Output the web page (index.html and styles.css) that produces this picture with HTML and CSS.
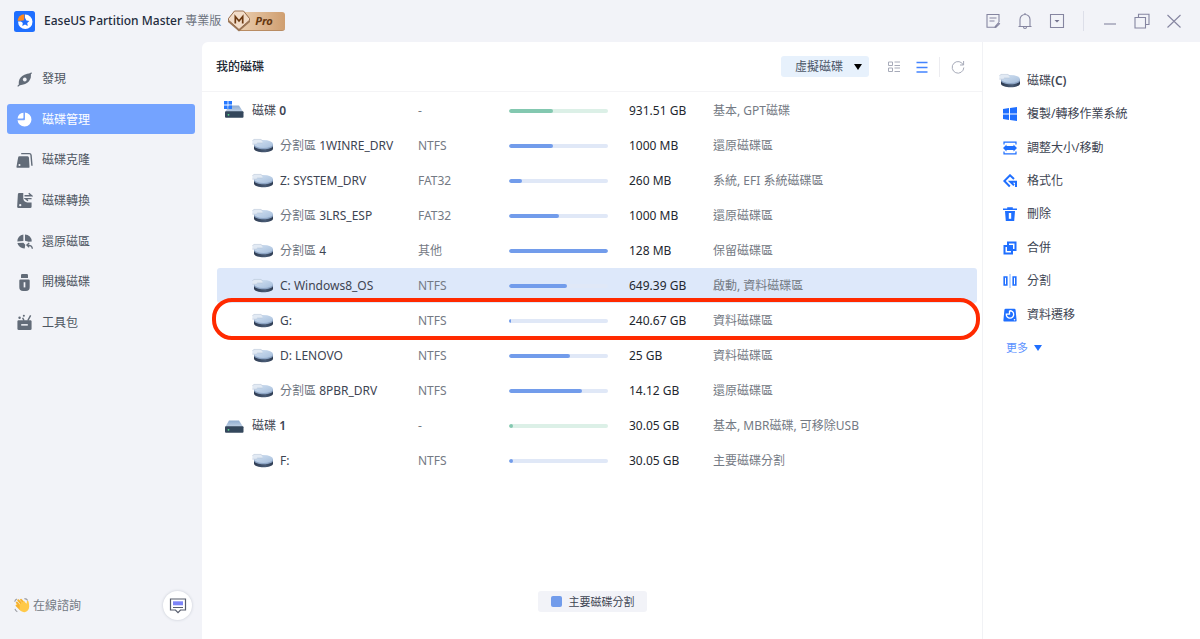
FILE: index.html
```html
<!DOCTYPE html>
<html lang="zh-Hant">
<head>
<meta charset="utf-8">
<meta name="viewport" content="width=device-width, initial-scale=1">
<title>EaseUS Partition Master</title>
<link rel="stylesheet" href="styles.css">
</head>
<body>
<svg class="defs" aria-hidden="true">
  <defs>
    <linearGradient id="disk-top" x1="0" y1="0" x2="1" y2="1"><stop offset="0" stop-color="#d3e2f3"/><stop offset="1" stop-color="#a6bedb"/></linearGradient>
    <linearGradient id="disk-side" x1="0" y1="0" x2="1" y2="0"><stop offset="0" stop-color="#2c3a50"/><stop offset=".6" stop-color="#4a5c76"/><stop offset="1" stop-color="#2c3a50"/></linearGradient>
    <linearGradient id="box-top" x1="0" y1="0" x2="0" y2="1"><stop offset="0" stop-color="#8facd0"/><stop offset="1" stop-color="#c5d4e6"/></linearGradient>
    <symbol id="volume" viewBox="0 0 22 16">
      <path d="M2 7v3.500c0 5 19 5 19 0V7z" fill="url(#disk-side)"/>
      <path d="M2 6v1.500c0 5 19 5 19 0V6z" fill="#8ea6c6"/>
      <ellipse cx="11.500" cy="6" rx="9.500" ry="4" fill="url(#disk-top)"/>
      <path d="M.4 3l1.400-1.600h7.400L10.400 3v2H5.500L4.300 6.200H.4z" fill="#e2eaf4"/>
      <path d="M.4 3l1.400-1.600h7.400L10.400 3M.4 6.200h3.900L5.500 5h4.900" fill="none" stroke="#aebdd2" stroke-width=".5"/>
    </symbol>
    <symbol id="drive" viewBox="0 0 20 18">
      <path d="M5 3.500h10l4.500 7H1z" fill="url(#box-top)"/>
      <rect x="1" y="9.300" width="18.500" height="6.400" rx="1" fill="#34475c"/>
      <circle cx="4.500" cy="12.800" r=".9" fill="#58d68d"/>
    </symbol>
  </defs>
</svg>
<div class="app">
  <header class="titlebar">
    <svg class="logo" viewBox="0 0 21 21"><rect width="21" height="21" rx="2.500" fill="#1f6fff"/><circle cx="11.300" cy="10.800" r="7.200" fill="#fff"/><path d="M11 10.500V3H3.300v7.500z" fill="#1f6fff"/><path d="M10.300 9.800V3.200A7 7 0 0 0 3.500 9.800z" fill="#ff8a1e"/><path d="m11 6.800 1.400 2.700 3 .4-2.200 2 .6 3-2.800-1.400-2.700 1.400.5-3-2.100-2 3-.4z" fill="#1f6fff"/></svg>
    <h1 class="app-name">EaseUS Partition Master <span class="edition">專業版</span></h1>
    <span class="pro">
      <svg class="pro-gem" viewBox="0 0 24 22" aria-hidden="true"><path d="M7 1.500h10l6 7.500v3L12 21.500 1 12V9z" fill="#9b7657"/><path d="M7.500 1h9L22.500 8.500v1.700L12 19.500 1.500 10.200V8.500z" fill="#f2dcc8" stroke="#936846" stroke-width=".9"/><path d="M8.300 13.500V6.500l3.700 4.500 3.700-4.500v7" fill="none" stroke="#6d3a12" stroke-width="1.700"/></svg>
      <span class="pro-label">Pro</span>
    </span>
    <div class="window-tools">
      <button class="tool" aria-label="筆記"><svg viewBox="0 0 16 16"><path d="M14 9V1.500H2v12.800h7M4.500 5h7M4.500 8h5M9.500 14.300l4-4.500 1 1-3.700 3.700z"/></svg></button>
      <button class="tool" aria-label="通知"><svg viewBox="0 0 16 18"><path d="M1.500 14.500h13M3 14V7.500a5 5 0 0 1 10 0V14M6.500 15c0 2 3 2 3 0M8 2.500V1"/></svg></button>
      <button class="tool" aria-label="選單"><svg viewBox="0 0 16 16"><path d="M1.500 1.500h13v13h-13z"/><path d="m5.500 7 2.500 2.500L10.500 7z" fill="#74748f" stroke="none"/></svg></button>
    </div>
    <div class="window-controls">
      <button class="tool" aria-label="最小化"><svg viewBox="0 0 16 16"><path d="M2 11h12"/></svg></button>
      <button class="tool" aria-label="還原"><svg viewBox="0 0 16 16"><path d="M1 4.500h10.500V15H1zM4.500 4.500V1.200H15v10.300h-3.500"/></svg></button>
      <button class="tool" aria-label="關閉"><svg viewBox="0 0 16 16"><path d="m1.500 2 13 12.500m0-12.500-13 12.500"/></svg></button>
    </div>
  </header>

  <aside class="sidebar">
    <nav class="nav">
      <a class="nav-item" href="#discover"><svg viewBox="0 0 18 18"><path d="M3.200 15.300C1.800 9.500 5 3.200 15.500 2.500 17 8.500 13.500 14.500 3.200 15.300z"/><circle cx="9.300" cy="9" r="2" fill="#f2f3f8"/><path d="m1.800 16.300 3-3M13.500 4.500 16.500 1.800" stroke="#626b78" stroke-width="1.300"/></svg>發現</a>
      <a class="nav-item active" href="#manage"><svg viewBox="0 0 18 18"><path d="M9.500 8.800V1.700a7.400 7.400 0 1 1-7.900 8.100h6.900a1 1 0 0 0 1-1z"/><path d="M1.700 8A6.800 6.800 0 0 1 7.900 1.800V7a1 1 0 0 1-1 1z"/></svg>磁碟管理</a>
      <a class="nav-item" href="#clone"><svg viewBox="0 0 18 18"><path d="M3.800 4.500h8.400a1.500 1.500 0 0 1 1.500 1.600l.6 9.400a1.200 1.200 0 0 1-1.200 1.300H1.700a1.200 1.200 0 0 1-1.200-1.300l1.700-9.500a1.600 1.600 0 0 1 1.600-1.500z"/><circle cx="3.700" cy="13.700" r="1.100" fill="#f2f3f8"/><path d="M5.500 1.700h8.700q1.500 0 1.700 1.500l1 11.300" fill="none" stroke="#626b78" stroke-width="1.500"/></svg>磁碟克隆</a>
      <a class="nav-item" href="#convert"><svg viewBox="0 0 18 18"><path d="M3.500 1h4.200v6q.5 4 4.300 4h4.500v4.500a1.500 1.500 0 0 1-1.500 1.500H2.700a1.500 1.500 0 0 1-1.500-1.500l.8-13A1.500 1.500 0 0 1 3.500 1z"/><circle cx="4.500" cy="14" r="1.200" fill="#f2f3f8"/><path d="M9 4h7.500l-3-2.700M16.500 7H10l2.700 2.300" fill="none" stroke="#626b78" stroke-width="1.500"/></svg>磁碟轉換</a>
      <a class="nav-item" href="#recover"><svg viewBox="0 0 18 18"><path d="M7.800 1.500v7L1.400 9A7.400 7.400 0 0 1 7.800 1.500zM9.500 1.500A7.400 7.400 0 0 1 16.700 9l-3.200.3-4-1zM1.500 10.500l6.300-.3 2 2.300-.6 4A7.400 7.400 0 0 1 1.500 10.500z"/><path d="M17.300 16.800q0-4-5.500-4m2.200-2.300-2.500 2.300 2.500 2.300" fill="none" stroke="#626b78" stroke-width="1.400"/></svg>還原磁區</a>
      <a class="nav-item" href="#boot"><svg viewBox="0 0 18 18"><path d="M6.500 0h5a1.200 1.200 0 0 1 1.200 1.200v3H5.300v-3A1.200 1.200 0 0 1 6.500 0zM4.800 5.700h8.400a1.300 1.300 0 0 1 1.300 1.300v7q0 4-4 4h-3q-4 0-4-4V7a1.300 1.300 0 0 1 1.300-1.300z"/><path d="M9 8.700v5.500" stroke="#f2f3f8" stroke-width="1.800"/></svg>開機磁碟</a>
      <a class="nav-item" href="#toolkit"><svg viewBox="0 0 18 18"><path d="M2.300 6.500h13.400l.8 1v8a1.500 1.500 0 0 1-1.500 1.500H3a1.500 1.500 0 0 1-1.500-1.500v-8z"/><path d="M5.500 11.500h7" stroke="#f2f3f8" stroke-width="1.600"/><path d="m12.500 7 3-5.500M8.500 7 7 4" stroke="#626b78" stroke-width="1.500"/><circle cx="3.800" cy="4" r="1.300"/><circle cx="8.300" cy="1.800" r="1.100"/></svg>工具包</a>
    </nav>
    <div class="support">
      <svg class="wave" viewBox="0 0 18 18" aria-hidden="true"><path d="M11 1.700q2.500 0 3.500 2M1 12.500q.5 2 2.500 3M.8 5Q1 3 3 2" fill="none" stroke="#9b9ca3" stroke-width="1.200"/><path d="m4.500 3.500 4 4.500M3 6l4.500 5M7.500 3l4 4.500M2.800 9l4 4" stroke="#f7b32d" stroke-width="2.200" stroke-linecap="round"/><path d="m6 8 4.500-4 2.500 3.200q.8-1 .6-2.700.8-1.400 1.800.2.500 2 .7 5.300-.2 4.500-4.200 6-3.500.6-6-2.500z" fill="#ffc94a"/></svg>
      <span>在線諮詢</span>
      <button class="chat" aria-label="在線諮詢"><svg viewBox="0 0 18 18"><path d="M1.500 2h15v11h-5L9 15.700 6.500 13h-5z" fill="#fff" stroke="#565c6c" stroke-width="1.200"/><path d="M4 4.300h10v4H4z" fill="#7d84f7"/><path d="M4 10.500h10" stroke="#565c6c"/></svg></button>
    </div>
  </aside>

  <main class="main">
    <div class="toolbar">
      <h2 class="heading">我的磁碟</h2>
      <label class="picker">
        <select aria-label="虛擬磁碟"><option>虛擬磁碟</option></select>
        <svg viewBox="0 0 8 6" aria-hidden="true"><path d="M0 0h8L4 6z"/></svg>
      </label>
      <button class="view" aria-label="詳細檢視"><svg viewBox="0 0 12 12"><path d="M.5 1h4v3.500h-4zM.5 7h4v3.500h-4zM6.500 1H12M6.500 4.500H12M6.500 7H12M6.500 10.500H12"/></svg></button>
      <button class="view selected" aria-label="清單檢視"><svg viewBox="0 0 12 12"><path d="M.5 1.500h11M.5 6.500h11M.5 11h11"/></svg></button>
      <button class="view refresh" aria-label="重新整理"><svg viewBox="0 0 14 14"><path d="M12.300 5A5.800 5.800 0 1 0 12.800 7.500M12.600 1v4H9"/></svg></button>
    </div>

    <table class="disks">
      <colgroup><col class="c-name"><col class="c-fs"><col class="c-use"><col class="c-size"><col class="c-type"></colgroup>
      <tbody>
        <tr class="disk"><th scope="row"><span class="name"><span class="drive-box"><svg><use href="#drive"/></svg><svg class="win" viewBox="0 0 8 8"><path d="M0 0h3.600v3.600H0zM4.400 0H8v3.600H4.400zM0 4.400h3.600V8H0zM4.400 4.400H8V8H4.400z"/></svg></span><span>磁碟 <b>0</b></span></span></th><td>-</td><td><div class="bar"><div class="fill" style="width:44%"></div></div></td><td class="size">931.51 GB</td><td>基本, GPT磁碟</td></tr>
        <tr><th scope="row"><span class="name"><svg><use href="#volume"/></svg><span><i>分割區</i> 1WINRE_DRV</span></span></th><td>NTFS</td><td><div class="bar"><div class="fill" style="width:44%"></div></div></td><td class="size">1000 MB</td><td>還原磁碟區</td></tr>
        <tr><th scope="row"><span class="name"><svg><use href="#volume"/></svg><span>Z: SYSTEM_DRV</span></span></th><td>FAT32</td><td><div class="bar"><div class="fill" style="width:13%"></div></div></td><td class="size">260 MB</td><td>系統, EFI 系統磁碟區</td></tr>
        <tr><th scope="row"><span class="name"><svg><use href="#volume"/></svg><span><i>分割區</i> 3LRS_ESP</span></span></th><td>FAT32</td><td><div class="bar"><div class="fill" style="width:50%"></div></div></td><td class="size">1000 MB</td><td>還原磁碟區</td></tr>
        <tr><th scope="row"><span class="name"><svg><use href="#volume"/></svg><span><i>分割區</i> 4</span></span></th><td>其他</td><td><div class="bar"><div class="fill" style="width:100%"></div></div></td><td class="size">128 MB</td><td>保留磁碟區</td></tr>
        <tr class="current"><th scope="row"><span class="name"><svg><use href="#volume"/></svg><span>C: Windows8_OS</span></span></th><td>NTFS</td><td><div class="bar"><div class="fill" style="width:59%"></div></div></td><td class="size">649.39 GB</td><td>啟動, 資料磁碟區</td></tr>
        <tr class="marked"><th scope="row"><span class="name"><svg><use href="#volume"/></svg><span>G:</span></span></th><td>NTFS</td><td><div class="bar"><div class="fill" style="width:2%"></div></div></td><td class="size">240.67 GB</td><td>資料磁碟區</td></tr>
        <tr><th scope="row"><span class="name"><svg><use href="#volume"/></svg><span>D: LENOVO</span></span></th><td>NTFS</td><td><div class="bar"><div class="fill" style="width:62%"></div></div></td><td class="size">25 GB</td><td>資料磁碟區</td></tr>
        <tr><th scope="row"><span class="name"><svg><use href="#volume"/></svg><span><i>分割區</i> 8PBR_DRV</span></span></th><td>NTFS</td><td><div class="bar"><div class="fill" style="width:74%"></div></div></td><td class="size">14.12 GB</td><td>還原磁碟區</td></tr>
        <tr class="disk"><th scope="row"><span class="name"><span class="drive-box"><svg><use href="#drive"/></svg></span><span>磁碟 <b>1</b></span></span></th><td>-</td><td><div class="bar"><div class="fill" style="width:4%"></div></div></td><td class="size">30.05 GB</td><td>基本, MBR磁碟, 可移除USB</td></tr>
        <tr><th scope="row"><span class="name"><svg><use href="#volume"/></svg><span>F:</span></span></th><td>NTFS</td><td><div class="bar"><div class="fill" style="width:4%"></div></div></td><td class="size">30.05 GB</td><td>主要磁碟分割</td></tr>
      </tbody>
    </table>
    <div class="legend"><span class="swatch"></span>主要磁碟分割</div>
  </main>

  <aside class="panel">
    <h2 class="panel-title"><svg><use href="#volume"/></svg><span>磁碟<b>(C)</b></span></h2>
    <button class="action"><svg viewBox="0 0 14 14"><path d="M0 2 6 1.100v5.400H0zM7 1l7-1v6.500H7zM0 7.500h6v5.400L0 12zM7 7.500h7V14l-7-1z"/></svg>複製/轉移作業系統</button>
    <button class="action"><svg viewBox="0 0 14 14"><path d="M1 3.500V1.200h12v2.300M1 10.500v2.300h12v-2.300" class="line"/><path d="M0 7l3.500-3.500V5h7V3.500L14 7l-3.500 3.500V9h-7v1.500z"/></svg>調整大小/移動</button>
    <button class="action"><svg viewBox="0 0 14 14"><path d="M11 5 7 1.300 1.300 7l5.500 5.500M13 13V7.800H7.300l3.700 3.500" class="line thick"/></svg>格式化</button>
    <button class="action"><svg viewBox="0 0 14 14"><path d="M0 1.500h4.200V.3h5.600v1.200H14V3H0zM2 4h10l-.8 10H2.800z"/><path d="M5.800 6v5.800h2.400V6z" fill="#fff"/></svg>刪除</button>
    <button class="action"><svg viewBox="0 0 14 14"><path d="M5 1.500h7.500V9H5zM1.500 5H9v7.500H1.500z" class="line thick"/><path d="M5 5h4v4H5z"/></svg>合併</button>
    <button class="action"><svg viewBox="0 0 14 14"><path d="M1.200 3h2.600v8H1.200zM10.200 3h2.600v8h-2.600z" class="line bold"/><path d="M7 0v14" stroke="#7fb0ff"/></svg>分割</button>
    <button class="action"><svg viewBox="0 0 14 14"><path d="M2.700.8h8.600a1.300 1.300 0 0 1 1.300 1.200l1 10.300a1 1 0 0 1-1 1.200H1.400a1 1 0 0 1-1-1.200L1.400 2A1.300 1.300 0 0 1 2.700.8z"/><path d="M6.500 2.800v3.400H3.300a3.700 3.700 0 1 0 3.200-3.400" fill="none" stroke="#fff" stroke-width="1.300"/><circle cx="11.500" cy="11.700" r=".8" fill="#fff"/></svg>資料遷移</button>
    <button class="more">更多<svg viewBox="0 0 8 6" aria-hidden="true"><path d="M0 0h8L4 6z"/></svg></button>
  </aside>
</div>
</body>
</html>
```

FILE: styles.css
```css
* { box-sizing: border-box; }

body {
  margin: 0;
  background: #f2f3f8;
  color: #3d4452;
  font: 12px/18px "Noto Sans", "Noto Sans CJK TC", sans-serif;
}

button, select { font: inherit; color: inherit; border: 0; padding: 0; margin: 0; background: none; }
h1, h2 { margin: 0; font-size: 12px; }
i { font-style: normal; color: #6d7480; }
b { font-weight: 600; }
svg { flex: none; display: block; }
.defs { position: absolute; width: 0; height: 0; }

.app {
  display: grid;
  grid-template: 42px 1fr / 202px 1fr 218px;
  min-height: 100vh;
}

/* Title bar */
.titlebar { grid-column: 1 / -1; display: flex; align-items: center; padding: 0 18px 0 14px; }
.logo { width: 21px; height: 21px; }
.app-name { margin-left: 9px; font-weight: 500; color: #222b3d; }
.edition { font-weight: 400; color: #6d7480; }
.pro { display: flex; align-items: center; margin-left: 6px; }
.pro-gem { width: 24px; height: 22px; z-index: 1; }
.pro-label {
  margin-left: -14px;
  padding: 0 12px 0 18px;
  border-radius: 3px;
  border-bottom: 1px solid #b98c63;
  background: linear-gradient(90deg, #ecd0b2, #cf9e70);
  color: #643710;
  font-size: 11px;
  font-weight: 700;
  font-style: italic;
}
.window-tools { display: flex; gap: 16px; margin-left: auto; padding-right: 18px; border-right: 1px solid #dddfe9; }
.window-controls { display: flex; gap: 16px; padding-left: 18px; }
.tool { display: grid; place-items: center; width: 16px; height: 20px; }
.tool svg { width: 16px; height: 18px; fill: none; stroke: #8585a0; stroke-width: 1.1; }

/* Navigation */
.sidebar { display: flex; flex-direction: column; justify-content: space-between; padding: 21px 7px 19px; }
.nav { display: flex; flex-direction: column; justify-content: space-between; height: 274px; }
.nav-item {
  display: flex; align-items: center; gap: 9px;
  height: 30px; padding: 2px 0 0 9px;
  border-radius: 3px; color: #4d5561; text-decoration: none;
}
.nav-item svg { width: 17px; height: 17px; fill: #626b78; }
.nav-item.active { background: #74a3ff; color: #fff; }
.nav-item.active svg { fill: #fff; }
.support { display: flex; align-items: center; gap: 2px; padding: 0 3px 0 7px; color: #747a85; }
.wave { width: 17px; height: 17px; }
.chat {
  display: grid; place-items: center;
  width: 29px; height: 29px; margin-left: auto;
  border-radius: 50%; background: #fff; box-shadow: 0 0 3px #c4c8d2;
}
.chat svg { width: 18px; height: 18px; }

/* Disk list */
.main { display: flex; flex-direction: column; min-width: 0; background: #fff; border-radius: 6px 0 0 0; }
.toolbar { display: flex; align-items: center; height: 50px; padding: 0 17px 0 14px; border-bottom: 1px solid #f4f4f6; }
.heading { margin-right: auto; font-weight: 500; color: #202733; }
.picker { display: flex; align-items: center; height: 21px; padding: 0 7px 0 14px; border-radius: 3px; background: #e7f1fc; }
.picker select { appearance: none; width: 59px; color: #4b5667; }
.picker svg { width: 8px; height: 6px; }
.view { display: grid; place-items: center; width: 28px; height: 20px; }
.view svg { width: 12px; height: 12px; fill: none; stroke: #a7abb9; }
.picker + .view { margin-left: 11px; }
.view.selected svg { stroke: #4384ff; stroke-width: 1.3; }
.view.refresh { justify-items: end; width: 26px; margin-left: 3px; border-left: 1px solid #ececf0; }
.view.refresh svg { width: 14px; height: 14px; }

.disks {
  align-self: stretch;
  height: 386px; margin: 1px 5px 0 15px;
  table-layout: fixed; border-collapse: separate; border-spacing: 0;
}
.c-name { width: 201px; }
.c-fs { width: 91px; }
.c-use { width: 120px; }
.c-size { width: 84px; }
.disks th, .disks td { padding: 0; text-align: left; font-weight: 400; white-space: nowrap; vertical-align: middle; }
.disks td { color: #747a84; }
.disks .size { color: #23272f; }
.name { display: flex; align-items: center; gap: 6px; padding-left: 35px; }
.name > svg, .panel-title svg { width: 22px; height: 16px; }
.disk .name { gap: 8px; padding-left: 7px; }
.drive-box { position: relative; }
.drive-box svg { width: 20px; height: 18px; }
.drive-box .win { position: absolute; left: 0; top: -1px; width: 8px; height: 8px; fill: #2679ff; }
.bar { width: 99px; height: 4px; border-radius: 2px; background: #e0e8f7; overflow: hidden; }
.fill { height: 4px; border-radius: 2px; background: #729ceb; }
.disk .bar { background: #dcf0e7; }
.disk .fill { background: #83c8b0; }
.current > * { background: #dde8fa; }
.current > :first-child { border-radius: 3px 0 0 3px; }
.current > :last-child { border-radius: 0 3px 3px 0; }
.marked { position: relative; }
.marked th::after {
  content: "";
  position: absolute;
  inset: -5px -3px -1px -5px;
  border: 4px solid #ff2a00;
  border-radius: 20px;
}
.legend {
  display: flex; align-items: center; align-self: center; gap: 7px;
  height: 21px; margin: auto 0 27px; padding: 0 12px 0 13px;
  border-radius: 3px; background: #f2f3f8; font-size: 11px;
}
.swatch { width: 11px; height: 11px; border-radius: 2px; background: #729ceb; }

/* Actions for the selected volume */
.panel {
  display: grid; grid-auto-rows: 1fr; align-self: stretch; align-content: start;
  padding: 22px 16px 274px; background: #fff; border-left: 1px solid #f1f2f5;
}
.panel-title { display: flex; align-items: center; gap: 6px; font-weight: 400; }
.action { display: flex; align-items: center; gap: 10px; padding-left: 4px; text-align: left; white-space: nowrap; }
.action svg { width: 14px; height: 14px; fill: #1f6fff; }
.action .line { fill: none; stroke: #1f6fff; stroke-width: 1.2; }
.action .bold { stroke-width: 1.6; }
.action .thick { stroke-width: 2; }
.more { display: flex; align-items: center; gap: 6px; padding-left: 7px; color: #5b92ff; font-size: 11px; }
.more svg { width: 8px; height: 6px; fill: #1f6fff; }
```
